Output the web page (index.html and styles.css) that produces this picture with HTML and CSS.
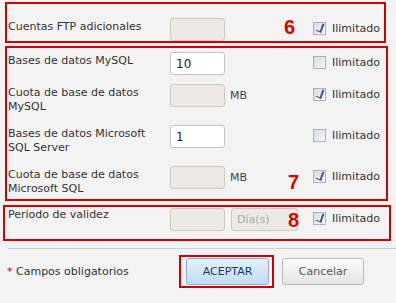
FILE: index.html
```html
<!DOCTYPE html>
<html lang="es">
<head>
    <meta charset="UTF-8">
    <title>Recursos adicionales</title>
    <link rel="stylesheet" href="styles.css">
</head>
<body>
    <div class="group group-ftp">
        <div class="row">
            <label class="label">Cuentas FTP adicionales</label>
            <input class="field" type="text" disabled>
            <span class="unit"></span>
            <span class="unlimited"><span class="check checked"></span>Ilimitado</span>
        </div>
        <span class="mark mark-6">6</span>
    </div>

    <div class="group group-db">
        <div class="row">
            <label class="label">Bases de datos MySQL</label>
            <input class="field" type="text" value="10">
            <span class="unit"></span>
            <span class="unlimited"><span class="check"></span>Ilimitado</span>
        </div>
        <div class="row tall">
            <label class="label">Cuota de base de datos MySQL</label>
            <input class="field" type="text" disabled>
            <span class="unit">MB</span>
            <span class="unlimited"><span class="check checked"></span>Ilimitado</span>
        </div>
        <div class="row tall">
            <label class="label">Bases de datos Microsoft SQL Server</label>
            <input class="field" type="text" value="1">
            <span class="unit"></span>
            <span class="unlimited"><span class="check"></span>Ilimitado</span>
        </div>
        <div class="row tall">
            <label class="label">Cuota de base de datos Microsoft SQL</label>
            <input class="field" type="text" disabled>
            <span class="unit">MB</span>
            <span class="unlimited"><span class="check checked"></span>Ilimitado</span>
        </div>
        <span class="mark mark-7">7</span>
    </div>

    <div class="group group-period">
        <div class="row">
            <label class="label">Periodo de validez</label>
            <input class="field" type="text" disabled>
            <span class="unit"><select class="period" disabled><option>Día(s)</option></select></span>
            <span class="unlimited"><span class="check checked"></span>Ilimitado</span>
        </div>
        <span class="mark mark-8">8</span>
    </div>

    <div class="footer">
        <span class="required"><span class="star">*</span> Campos obligatorios</span>
        <span class="highlight"><button class="btn btn-ok">ACEPTAR</button></span>
        <button class="btn btn-cancel">Cancelar</button>
    </div>
</body>
</html>
```

FILE: styles.css
```css
/* Page */
body {
    margin: 0;
    background-color: #f3f3f3;
    font: 11px/14px "DejaVu Sans", sans-serif;
    color: #333;
}

/* Red annotation boxes around each group */
.group {
    position: relative;
    border: 2px solid #d10000;
    box-sizing: border-box;
}

.group-ftp {
    margin: 2px 0 0 5px;
    width: 381px;
    height: 41px;
    padding-top: 14px;
}

.group-db {
    margin: 3px 0 0 5px;
    width: 383px;
    height: 155px;
    padding-top: 4px;
}

.group-period {
    margin: 4px 0 0 3px;
    width: 388px;
    height: 36px;
    padding-top: 1px;
}

/* One form row: label, field, unit, "Ilimitado" */
.row {
    display: flex;
    align-items: flex-start;
    padding-left: 1px;
    height: 32px;
}

.row.tall {
    height: 41px;
}

.group-ftp .row,
.group-period .row {
    height: auto;
}

.group-period .row {
    padding-left: 3px;
}

.label {
    width: 162px;
    padding: 2px 8px 0 0;
    box-sizing: border-box;
}

.group-period .label {
    padding-top: 0;
}

.field {
    width: 55px;
    height: 23px;
    box-sizing: border-box;
    margin: 0;
    padding: 0 5px;
    border: 1px solid #c4c4c4;
    border-radius: 3px;
    background-color: #fff;
    font: 12px "DejaVu Sans", sans-serif;
    color: #222;
}

.field:disabled {
    background-color: #ebeae4;
    border-color: #cacac4;
}

.unit {
    width: 88px;
    padding: 5px 0 0 5px;
    box-sizing: border-box;
    color: #444;
}

.group-period .unit {
    padding: 0 0 0 6px;
}

.period {
    appearance: none;
    -webkit-appearance: none;
    width: 67px;
    height: 23px;
    margin: 0;
    padding: 0 5px;
    border: 1px solid #cacac4;
    border-radius: 3px;
    background-color: #ebeae4;
    font: 11px "DejaVu Sans", sans-serif;
    color: #a8a8a8;
    opacity: 1;
}

.unlimited {
    display: flex;
    align-items: center;
    gap: 6px;
    margin-top: 4px;
    height: 13px;
    color: #333;
}

/* Checkbox look */
.check {
    width: 13px;
    height: 13px;
    box-sizing: border-box;
    border: 1px solid #a9b3c0;
    background: linear-gradient(135deg, #d6dce4, #f6f8fa);
    position: relative;
}

.check.checked::after {
    content: "";
    position: absolute;
    left: 3px;
    top: 0;
    width: 4px;
    height: 8px;
    border-right: 2px solid #3f5b86;
    border-bottom: 1px solid #3f5b86;
    transform: rotate(20deg);
}

/* Red annotation numbers */
.mark {
    position: absolute;
    font: bold 20px/20px "Liberation Sans", Arial, sans-serif;
    color: #e00000;
}

.mark-6 {
    left: 277px;
    top: 13px;
}

.mark-7 {
    left: 281px;
    top: 124px;
}

.mark-8 {
    left: 283px;
    top: 3px;
}

/* Footer with buttons */
.footer {
    display: flex;
    align-items: center;
    margin: 7px 0 0 8px;
    padding-top: 6px;
    border-top: 1px solid #c9cdd3;
}

.required {
    width: 172px;
    margin-left: -1px;
    color: #333;
}

.star {
    color: #d10000;
}

.highlight {
    display: inline-flex;
    border: 2px solid #d10000;
    padding: 1px 3px 1px 5px;
}

.btn {
    height: 27px;
    margin: 0;
    border-radius: 3px;
    font: 11px "DejaVu Sans", sans-serif;
    cursor: pointer;
}

.btn-ok {
    width: 83px;
    border: 1px solid #8fb0cf;
    background: linear-gradient(#e6f0f9, #c3dbf1);
    color: #1d3a5c;
}

.btn-cancel {
    width: 82px;
    margin-left: 8px;
    border: 1px solid #b9b9b9;
    background: linear-gradient(#fbfbfb, #e5e5e5);
    color: #555;
}
```
